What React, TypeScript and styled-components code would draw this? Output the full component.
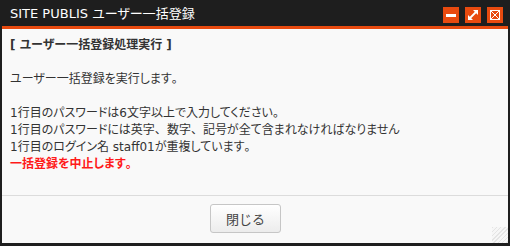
import React from 'react';
import styled, { createGlobalStyle } from 'styled-components';

const GlobalStyle = createGlobalStyle`
  html, body {
    margin: 0;
    padding: 0;
    background: #ffffff;
  }
  body {
    font-family: "DejaVu Sans", "Noto Sans CJK JP", sans-serif;
    font-feature-settings: "palt";
  }
`;

const Window = styled.div`
  position: relative;
  width: 510px;
  height: 246px;
  box-sizing: border-box;
  border: 2px solid #1e1e1e;
  border-bottom-width: 3px;
  display: flex;
  flex-direction: column;
  background: #f9f9f9;
`;

const TitleBar = styled.div`
  height: 24px;
  background: #1e1e1e;
  border-bottom: 3px solid #e84a0f;
  display: flex;
  align-items: center;
  padding: 0 5px 0 8px;
`;

const Title = styled.div`
  flex: 1;
  color: #ffffff;
  font-size: 13px;
  line-height: 16px;
  padding-bottom: 1px;
  white-space: nowrap;
`;

const Controls = styled.div`
  display: flex;
  gap: 6px;
  margin-top: 2px;
`;

const ControlButton = styled.div`
  width: 16px;
  height: 16px;
  background: #e84a0f;
  display: flex;
  align-items: center;
  justify-content: center;
`;

const Content = styled.div`
  flex: 1;
  padding: 8px 8px 0;
  color: #333333;
  font-size: 12px;
  line-height: 17px;
`;

const Line = styled.div<{ $bold?: boolean; $red?: boolean; $gap?: boolean }>`
  font-weight: ${(p) => (p.$bold ? 'bold' : 'normal')};
  color: ${(p) => (p.$red ? '#ff1a1a' : 'inherit')};
  margin-top: ${(p) => (p.$gap ? '17px' : '0')};
  white-space: nowrap;
`;

/* full-width punctuation keeps its em box, as in the original font */
const Wide = styled.span`
  font-feature-settings: normal;
`;

const Footer = styled.div`
  height: 48px;
  box-sizing: border-box;
  border-top: 1px solid #dcdcdc;
  display: flex;
  justify-content: center;
  align-items: flex-start;
  padding: 8px 19px 0 0;
`;

const CloseButton = styled.button`
  width: 71px;
  height: 29px;
  box-sizing: border-box;
  border: 1px solid #c6c6c6;
  border-radius: 3px;
  background: linear-gradient(#ffffff, #ececec);
  color: #444444;
  font-family: inherit;
  font-size: 13px;
  cursor: pointer;
  padding: 0;
`;

const ResizeGrip = styled.div`
  position: absolute;
  right: 0;
  bottom: 0;
  width: 16px;
  height: 16px;
  background: repeating-linear-gradient(
    135deg,
    #e4e4e4 0 1px,
    #f6f6f6 1px 3px
  );
`;

const MinimizeIcon = () => (
  <svg width="16" height="16" viewBox="0 0 16 16">
    <rect x="3" y="7" width="10" height="3" fill="#ffffff" />
  </svg>
);

const MaximizeIcon = () => (
  <svg width="16" height="16" viewBox="0 0 16 16">
    <path d="M5 11 L11 5" stroke="#ffffff" strokeWidth="1.8" />
    <path d="M8 3 H13 V8 Z" fill="#ffffff" />
    <path d="M3 8 V13 H8 Z" fill="#ffffff" />
  </svg>
);

const CloseIcon = () => (
  <svg width="16" height="16" viewBox="0 0 16 16">
    <rect x="3.5" y="3.5" width="9" height="9" fill="none" stroke="#ffffff" strokeWidth="1" />
    <path d="M4 4 L12 12 M12 4 L4 12" stroke="#ffffff" strokeWidth="1" />
  </svg>
);

const App: React.FC = () => {
  return (
    <>
      <GlobalStyle />
      <Window>
        <TitleBar>
          <Title>SITE PUBLIS ユーザー一括登録</Title>
          <Controls>
            <ControlButton>
              <MinimizeIcon />
            </ControlButton>
            <ControlButton>
              <MaximizeIcon />
            </ControlButton>
            <ControlButton>
              <CloseIcon />
            </ControlButton>
          </Controls>
        </TitleBar>
        <Content>
          <Line $bold>[ ユーザー一括登録処理実行 ]</Line>
          <Line $gap>ユーザー一括登録を実行します<Wide>。</Wide></Line>
          <Line $gap>1行目のパスワードは6文字以上で入力してください<Wide>。</Wide></Line>
          <Line>
            1行目のパスワードには英字<Wide>、</Wide>数字<Wide>、</Wide>記号が全て含まれなければなりません
          </Line>
          <Line>1行目のログイン名 staff01が重複しています<Wide>。</Wide></Line>
          <Line $bold $red>一括登録を中止します<Wide>。</Wide></Line>
        </Content>
        <Footer>
          <CloseButton>閉じる</CloseButton>
        </Footer>
        <ResizeGrip />
      </Window>
    </>
  );
};

export default App;
